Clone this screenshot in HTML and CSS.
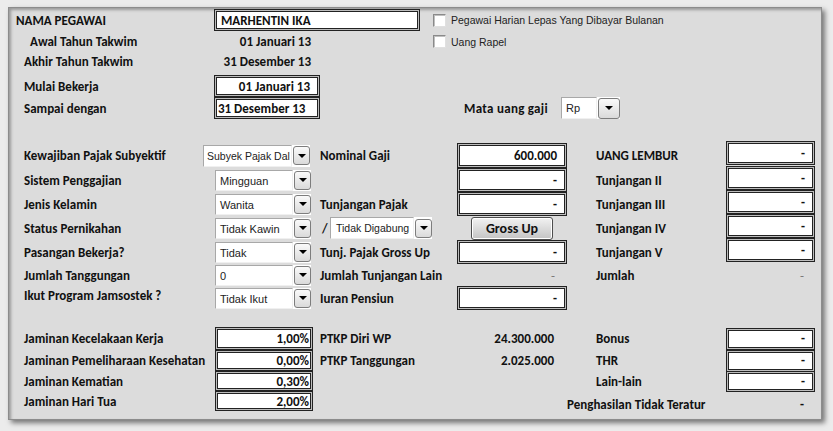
FILE: index.html
```html
<!DOCTYPE html>
<html>
<head>
<meta charset="utf-8">
<title>Form Pegawai</title>
<link rel="stylesheet" href="styles.css">
</head>
<body>
<div class="panel">
  <section class="sec-a">
    <div class="row h22">
      <div class="c1 lbl ind-nama">NAMA PEGAWAI</div>
      <div class="box w-name left">MARHENTIN IKA</div>
      <div class="chk chk-1"><span class="cb"></span><span>Pegawai Harian Lepas Yang Dibayar Bulanan</span></div>
    </div>
    <div class="row h21">
      <div class="c1 lbl ind-awal">Awal Tahun Takwim</div>
      <div class="c2 val">01 Januari 13</div>
      <div class="chk chk-2"><span class="cb"></span><span>Uang Rapel</span></div>
    </div>
    <div class="row h19">
      <div class="c1 lbl">Akhir Tahun Takwim</div>
      <div class="c2 val">31 Desember 13</div>
    </div>
    <div class="row h22 mt4">
      <div class="c1 lbl">Mulai Bekerja</div>
      <div class="box c2">01 Januari 13</div>
    </div>
    <div class="row h22">
      <div class="c1 lbl">Sampai dengan</div>
      <div class="box c2 left tight">31 Desember 13</div>
      <div class="lbl mata">Mata uang gaji</div>
      <div class="dd dd-rp"><span class="dd-field">Rp</span><span class="dd-btn"></span></div>
    </div>
  </section>

  <section class="sec-b">
    <div class="row h25">
      <div class="c1 lbl narrow">Kewajiban Pajak Subyektif</div>
      <div class="dd dd-wide"><span class="dd-field">Subyek Pajak Dal</span><span class="dd-btn"></span></div>
      <div class="c3 lbl">Nominal Gaji</div>
      <div class="box c4 full">600.000</div>
      <div class="c5 lbl pl">UANG LEMBUR</div>
      <div class="box c6 up">-</div>
    </div>
    <div class="row h24">
      <div class="c1 lbl">Sistem Penggajian</div>
      <div class="c2"><div class="dd dd-std"><span class="dd-field">Mingguan</span><span class="dd-btn"></span></div></div>
      <div class="c3"></div>
      <div class="box c4 full">-</div>
      <div class="c5 lbl pl">Tunjangan II</div>
      <div class="box c6 up">-</div>
    </div>
    <div class="row h24">
      <div class="c1 lbl">Jenis Kelamin</div>
      <div class="c2"><div class="dd dd-std"><span class="dd-field">Wanita</span><span class="dd-btn"></span></div></div>
      <div class="c3 lbl">Tunjangan Pajak</div>
      <div class="box c4 full">-</div>
      <div class="c5 lbl pl">Tunjangan III</div>
      <div class="box c6 up">-</div>
    </div>
    <div class="row h24">
      <div class="c1 lbl">Status Pernikahan</div>
      <div class="c2"><div class="dd dd-std"><span class="dd-field">Tidak Kawin</span><span class="dd-btn"></span></div></div>
      <div class="c3 gab">
        <span class="slash">/</span>
        <div class="dd dd-gab"><span class="dd-field small">Tidak Digabung</span><span class="dd-btn"></span></div>
      </div>
      <div class="c4"><button class="gross">Gross Up</button></div>
      <div class="c5 lbl pl">Tunjangan IV</div>
      <div class="box c6 up">-</div>
    </div>
    <div class="row h24">
      <div class="c1 lbl">Pasangan Bekerja?</div>
      <div class="c2"><div class="dd dd-std"><span class="dd-field">Tidak</span><span class="dd-btn"></span></div></div>
      <div class="c3 lbl">Tunj. Pajak Gross Up</div>
      <div class="box c4 full">-</div>
      <div class="c5 lbl pl">Tunjangan V</div>
      <div class="box c6 up">-</div>
    </div>
    <div class="row h22">
      <div class="c1 lbl">Jumlah Tanggungan</div>
      <div class="c2"><div class="dd dd-std"><span class="dd-field">0</span><span class="dd-btn"></span></div></div>
      <div class="c3 lbl">Jumlah Tunjangan Lain</div>
      <div class="c4 val dash">-</div>
      <div class="c5 lbl pl">Jumlah</div>
      <div class="c6 val dash">-</div>
    </div>
    <div class="row h24">
      <div class="c1 lbl raise">Ikut Program Jamsostek ?</div>
      <div class="c2"><div class="dd dd-std"><span class="dd-field">Tidak Ikut</span><span class="dd-btn"></span></div></div>
      <div class="c3 lbl">Iuran Pensiun</div>
      <div class="box c4 full">-</div>
    </div>
  </section>

  <section class="sec-c">
    <div class="row h23">
      <div class="c1 lbl">Jaminan Kecelakaan Kerja</div>
      <div class="c2"><div class="box pct">1,00%</div></div>
      <div class="c3 lbl">PTKP Diri WP</div>
      <div class="c4 val">24.300.000</div>
      <div class="c5 lbl pl">Bonus</div>
      <div class="box c6">-</div>
    </div>
    <div class="row h21">
      <div class="c1 lbl">Jaminan Pemeliharaan Kesehatan</div>
      <div class="c2"><div class="box pct">0,00%</div></div>
      <div class="c3 lbl">PTKP Tanggungan</div>
      <div class="c4 val">2.025.000</div>
      <div class="c5 lbl pl">THR</div>
      <div class="box c6">-</div>
    </div>
    <div class="row h20">
      <div class="c1 lbl">Jaminan Kematian</div>
      <div class="c2"><div class="box pct">0,30%</div></div>
      <div class="c3"></div>
      <div class="c4"></div>
      <div class="c5 lbl pl">Lain-lain</div>
      <div class="box c6 tall">-</div>
    </div>
    <div class="row h20">
      <div class="c1 lbl">Jaminan Hari Tua</div>
      <div class="c2"><div class="box pct">2,00%</div></div>
      <div class="c3"></div>
      <div class="c4"></div>
      <div class="c5 lbl low">Penghasilan Tidak Teratur</div>
      <div class="c6 val low">-</div>
    </div>
  </section>
</div>
</body>
</html>
```

FILE: styles.css
```css
* { box-sizing: border-box; margin: 0; padding: 0; }
html, body { width: 833px; height: 431px; overflow: hidden; }
body {
  background: #ececec;
  font-family: Carlito, Lato, "Open Sans", sans-serif;
  font-weight: 700;
  font-size: 13px;
  color: #111;
}
.panel {
  margin: 7px 0 0 8px;
  width: 814px;
  height: 413px;
  background: #dcdcdc;
  border: 1px solid #8c8c8c;
  box-shadow: inset 2px 2px 3px rgba(0,0,0,0.3), 3px 3px 5px rgba(0,0,0,0.5);
  padding: 1px 0 0 15px;
}
.row { display: flex; align-items: center; }
.h19 { height: 19px; }
.h20 { height: 20px; }
.h21 { height: 21px; }
.h22 { height: 22px; }
.h23 { height: 23px; }
.h24 { height: 24px; }
.h25 { height: 25px; }
.mt4 { margin-top: 4px; }
.sec-b { margin-top: 24px; }
.sec-c { margin-top: 17px; }

.c1 { width: 190px; flex: none; }
.c2 { width: 106px; flex: none; }
.c3 { width: 137px; flex: none; }
.c4 { width: 110px; flex: none; }
.c5 { width: 159px; flex: none; }
.c6 { width: 89px; flex: none; }

.lbl { white-space: nowrap; }
.ind-nama { margin-left: -8px; width: 198px; }
.ind-awal { padding-left: 6px; }
.narrow { width: 179px; }
.pl { padding-left: 29px; }
.raise { position: relative; top: -3px; }
.low { position: relative; top: 3px; }
.val { text-align: right; padding-right: 9px; white-space: nowrap; }
.sec-c .c4.val { padding-right: 13px; }
.dash { color: #777; font-weight: 400; }
.c4.dash { padding-right: 12px; }
.c6.val { padding-right: 11px; }

.box {
  background: #fff;
  border: 1px solid #222;
  box-shadow: inset 0 0 0 1px #bdbdbd, inset 0 0 0 2px #222;
  height: 22px;
  display: flex;
  align-items: center;
  justify-content: flex-end;
  padding: 0 9px 0 6px;
  white-space: nowrap;
  overflow: hidden;
}
.box.left { justify-content: flex-start; }
.box.tight { padding-left: 3px; }
.w-name { width: 206px; flex: none; }
.box.full { height: 100%; }
.box.up { height: 24px; align-self: flex-start; margin-top: -2px; }
.box.tall { height: 21px; }
.pct { width: 98px; margin-left: 1px; height: 100%; padding-right: 3px; }
.sec-c .row > .c2 { height: 100%; }

.chk {
  display: flex;
  align-items: center;
  font-family: "Liberation Sans", Arial, sans-serif;
  font-weight: 400;
  font-size: 10.5px;
  color: #222;
  white-space: nowrap;
}
.chk-1 { margin-left: 13px; }
.chk-2 { margin-left: 113px; }
.cb {
  width: 13px;
  height: 13px;
  background: #fff;
  border: 1px solid #8a8a8a;
  border-right-color: #e0e0e0;
  border-bottom-color: #e0e0e0;
  box-shadow: inset 1px 1px 0 #bfbfbf;
  margin-right: 5px;
}

.mata { width: 97px; margin-left: 144px; letter-spacing: 0.3px; }

.dd { display: flex; align-items: center; height: 21px; background: #fff; }
.dd-field {
  flex: 1;
  height: 100%;
  border: 1px solid #a8a8a8;
  border-right-color: #f0f0f0;
  border-bottom-color: #f0f0f0;
  font-family: "Liberation Sans", Arial, sans-serif;
  font-weight: 400;
  font-size: 11px;
  color: #222;
  padding: 4px 0 0 4px;
  white-space: nowrap;
  overflow: hidden;
}
.dd-field.small { font-size: 10.5px; padding-left: 5px; }
.dd-btn {
  position: relative;
  flex: none;
  width: 17px;
  height: 19px;
  margin-left: 1px;
  border: 1px solid #7d7d7d;
  border-radius: 3px;
  background: linear-gradient(#fafafa, #dadada);
}
.dd-btn::after {
  content: "";
  position: absolute;
  left: 50%;
  top: 50%;
  margin: -2px 0 0 -4px;
  border-left: 4px solid transparent;
  border-right: 4px solid transparent;
  border-top: 4px solid #000;
}
.dd-std { width: 96px; margin-left: 1px; }
.dd-wide { width: 107px; height: 22px; flex: none; margin-right: 10px; }
.dd-wide .dd-field { padding-left: 3px; font-size: 10.5px; }
.dd-rp { width: 59px; height: 22px; }
.dd-rp .dd-btn { width: 22px; height: 21px; }
.dd-gab { width: 102px; height: 22px; }

.gab { display: flex; align-items: center; }
.slash { width: 10px; padding-left: 2px; }

.gross {
  margin-left: 14px;
  width: 82px;
  height: 23px;
  border: 1px solid #4d4d4d;
  border-radius: 3px;
  background: linear-gradient(#f2f2f2, #c4c4c4);
  font-family: Carlito, Lato, "Open Sans", sans-serif;
  font-weight: 700;
  font-size: 14px;
  color: #111;
  box-shadow: inset 0 0 0 1px #fff;
}
```
